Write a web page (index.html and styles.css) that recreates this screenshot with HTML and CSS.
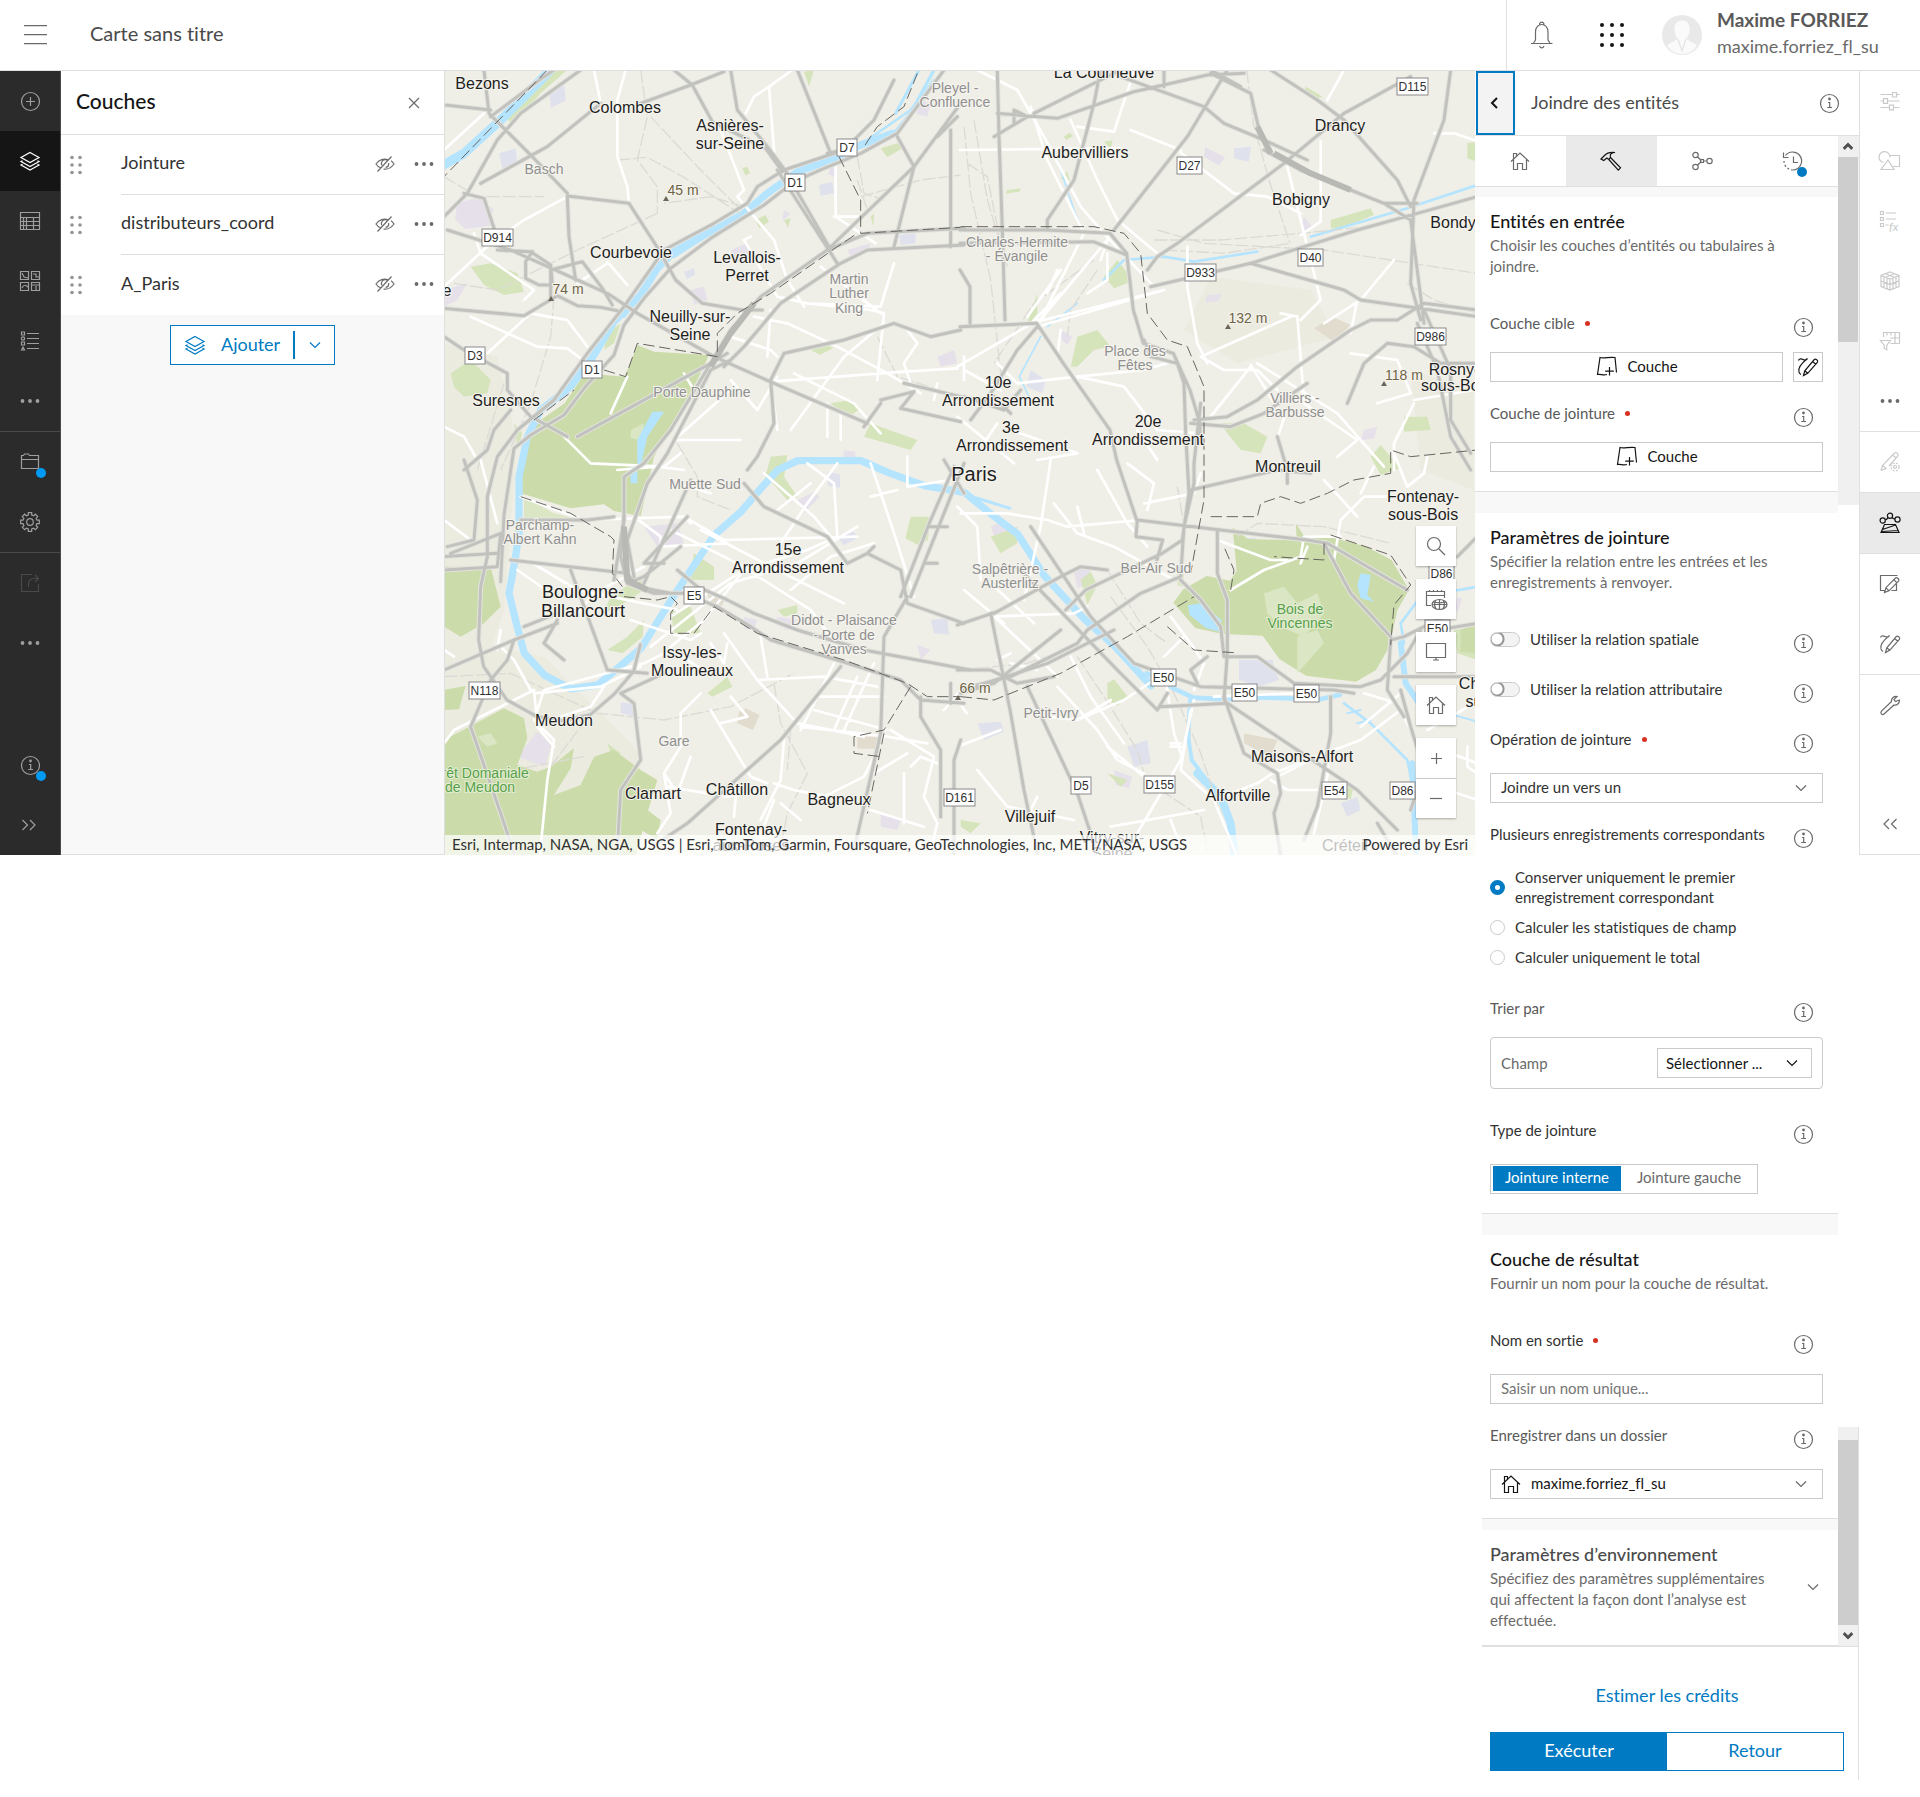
FILE: index.html
```html
<!DOCTYPE html>
<html lang="fr">
<head>
<meta charset="utf-8">
<meta name="viewport" content="width=device-width, initial-scale=1">
<title>Carte sans titre</title>
<link rel="stylesheet" href="styles.css">
</head>
<body>
<svg class="sprite" aria-hidden="true">
  <symbol id="i-info" viewBox="0 0 24 24"><circle cx="12.500" cy="12.500" r="9"/><circle class="fill" cx="12.500" cy="8" r="1.400"/><path d="M11 11.500h1.700v5M10.300 16.500h4.700"/></symbol>
  <symbol id="i-plus-circle" viewBox="0 0 24 24"><circle cx="12.500" cy="12.500" r="9"/><path d="M12.500 8v9M8 12.500h9"/></symbol>
  <symbol id="i-layers" viewBox="0 0 24 24"><path d="M12 3.500l9 5-9 5-9-5zM4.500 11.800L3 12.600l9 4.900 9-4.900-1.500-.8M4.500 15.300L3 16.100l9 4.900 9-4.900-1.500-.8"/></symbol>
  <symbol id="i-table" viewBox="0 0 24 24"><path d="M2.500 3.500h19v17h-19zM2.500 8.500h19M2.500 12.500h19M2.500 16.500h19M8.500 8.500v12M15.500 8.500v12M5.500 8.500v12"/></symbol>
  <symbol id="i-basemap" viewBox="0 0 24 24"><path d="M2.500 2.500h8v8h-8zM13.500 2.500h8v8h-8zM2.500 13.500h8v8h-8zM13.500 13.500h8v8h-8zM4 4l2 4 4 1M15 5h3v3h3M4 19c2-4 4-3 6-1M14 16h7M18 17v4"/></symbol>
  <symbol id="i-legend" viewBox="0 0 24 24"><path d="M9 4.500h12M9 9.500h12M9 14.500h12M9 19.500h12M3.500 3h3v3h-3zM3.500 13h3v3h-3zM3.500 21l1.500-3 1.500 3z"/><circle cx="5" cy="9.500" r="1.600"/></symbol>
  <symbol id="i-more" viewBox="0 0 24 24"><g class="fill"><circle cx="4.500" cy="12" r="1.900"/><circle cx="12" cy="12" r="1.900"/><circle cx="19.500" cy="12" r="1.900"/></g></symbol>
  <symbol id="i-folder" viewBox="0 0 24 24"><path d="M3.500 18.500v-13h2l1-1.500h4l1 1.500h9v13zM3.500 9.500h17"/></symbol>
  <symbol id="i-gear" viewBox="0 0 24 24"><circle cx="12" cy="12" r="3.300"/><path d="M10.300 5V2.700h3.400V5l1.900.8 1.700-1.600 2.400 2.400-1.600 1.700.8 1.900h2.400v3.500h-2.400l-.8 1.900 1.600 1.700-2.400 2.400-1.700-1.600-1.900.8v2.400h-3.400v-2.400l-1.900-.8-1.700 1.600-2.400-2.400 1.600-1.700-.8-1.900H2.700v-3.500h2.400l.8-1.900-1.600-1.700 2.400-2.400 1.700 1.600z"/></symbol>
  <symbol id="i-share" viewBox="0 0 24 24"><path d="M14 3.500H3.500v17h17V13M10.500 16v-3c0-4 3-5.500 6-5.500h4M17 4l3.500 3.500L17 11"/></symbol>
  <symbol id="i-right2" viewBox="0 0 24 24"><path d="M4.500 7l5 5-5 5M12 7l5 5-5 5"/></symbol>
  <symbol id="i-left2" viewBox="0 0 24 24"><path d="M11 7l-5 5 5 5M18.500 7l-5 5 5 5"/></symbol>
  <symbol id="i-close" viewBox="0 0 24 24"><path d="M7 7l10 10M17 7L7 17"/></symbol>
  <symbol id="i-down" viewBox="0 0 24 24"><path d="M7 9.500l5 5 5-5"/></symbol>
  <symbol id="i-eye-off" viewBox="0 0 24 24"><path d="M18.500 4.500l-14 15M7.500 15.800C5.500 15 4 13.600 3 12c3-4.300 8-6 12.500-4M18 8.800c1.200.8 2.200 1.900 3 3.200-3 4-7 5.700-10.500 5M14 8c-4-1.200-6.500 1.800-5.300 5.300M15.700 11c.3 2.500-1 4-3.200 4.500"/></symbol>
  <symbol id="i-handle" viewBox="0 0 24 24"><g class="fill"><circle cx="8" cy="4.500" r="1.800"/><circle cx="16" cy="4.500" r="1.800"/><circle cx="8" cy="12" r="1.800"/><circle cx="16" cy="12" r="1.800"/><circle cx="8" cy="19.500" r="1.800"/><circle cx="16" cy="19.500" r="1.800"/></g></symbol>
  <symbol id="i-home" viewBox="0 0 24 24"><path d="M3 12.500L12 4l9 8.500M5.500 10.500v10h4v-6h5v6h4v-10M5.500 10V4.500h3V7"/></symbol>
  <symbol id="i-hammer" viewBox="0 0 24 24"><path d="M11.500 8.500l10 10.300-2.200 2.400L9.800 10.500M2 10l3.500-3.500C8 3.500 12 3 16 3.500c-3 .3-5 1.500-4.700 3.300L11.500 8.500 9.800 10.500 7.800 9 4.800 11.500z"/></symbol>
  <symbol id="i-model" viewBox="0 0 24 24"><circle cx="5.500" cy="6" r="2.700"/><circle cx="5.500" cy="18" r="2.700"/><circle cx="19.500" cy="12" r="2.700"/><path d="M7.500 8l4 3.500M7.500 16l4-3.500M14 12h2.500M10.500 10.500h3v3h-3z"/></symbol>
  <symbol id="i-history" viewBox="0 0 24 24"><path d="M4.500 6.500a9 9 0 1 1 7.500 14.500M2.500 3.500v5h5M12.500 7.500v6h4.500"/><path stroke-dasharray="2 2" d="M3 12a9 9 0 0 0 9 9"/></symbol>
  <symbol id="i-layer-add" viewBox="0 0 24 24"><path d="M12 20.500c-4 1-6-.5-9.500 0l2.500-17c4 1.500 9-1 15 0l1.500 15M14.500 13v8.500M10.200 17.200h8.600"/></symbol>
  <symbol id="i-sketch" viewBox="0 0 24 24"><path d="M7.500 20.500l1.300-4.700L18.300 4.500c1.200-1.200 4.200 1 3.200 2.600L11.700 18.300zM8.800 15.800l2.900 2.500M16.600 6.500l3.200 2.700M2.500 5.500c.5-2 3-2 4.500-1s3 .8 4.500-1c-5 4-10 9.500-8.500 13.500.5 1.200 1 2 2 2.500"/></symbol>
  <symbol id="i-sliders" viewBox="0 0 24 24"><path d="M2.500 5.500h12M18.500 5.500h3M14.500 3.500h4v4.500h-4zM2.500 12h3M9.500 12h12M5.500 9.700h4v4.600h-4zM2.500 18.500h9M15.500 18.500h6M11.500 16.200h4v4.600h-4z"/></symbol>
  <symbol id="i-shapes" viewBox="0 0 24 24"><path d="M3 20.500h13L10 11zM12 6.500h9.500v11h-6.500M5.500 13.500a5.500 5.500 0 1 1 6.500-5"/></symbol>
  <symbol id="i-cube" viewBox="0 0 24 24"><path d="M12 3l9 3.500v11L12 21l-9-3.500v-11zM3 6.500l9 3.500 9-3.500M12 10v11M6 7.700v11M9 9v11M15 9v11M18 7.700v11M3 12l9 3.500 9-3.500M7.500 4.800l9 3.500M16.500 4.800l-9 3.500"/></symbol>
  <symbol id="i-funnel" viewBox="0 0 24 24"><path d="M5.500 8V3.500h16v11h-9M9 3.500v3M13 3.500v3M17 3.500v11M12 9h9.500M2.500 11.500h10l-3.700 4.700v4.600l-2.600-1.300v-3.300z"/></symbol>
  <symbol id="i-style" viewBox="0 0 24 24"><path d="M3 20.500l1.500-5L16.500 3c2-1 4.500 1 3.500 3l-9 10M4.500 15.500L8 18.500l-5 2M14.500 5l3.500 3"/><circle cx="17" cy="17" r="1.500"/><circle cx="17" cy="17" r="4" stroke-dasharray="2 1.200"/></symbol>
  <symbol id="i-analysis" viewBox="0 0 24 24"><circle cx="4.700" cy="9.500" r="2.600"/><circle cx="12" cy="4.700" r="2.600"/><circle cx="19.500" cy="8.500" r="2.600"/><path d="M3 21.500l3.500-8h11l3.500 8zM4.500 18.500l13-4.500M4 20.500l16-1M7.300 8.700c2 0 2-1.500 2.700-2M14 6.700c1 .3 1.500 1.300 3 1.300"/></symbol>
  <symbol id="i-edit" viewBox="0 0 24 24"><path d="M7 18.500H2.500v-15h17M18.500 12v6.500h-5M6.500 20.500l1.400-4.800L17.500 6c1.500-1 4.200 1.200 3.200 3L11 18.800zM7.900 15.700l3.100 3.100M16 7.800l3 3"/></symbol>
  <symbol id="i-wrench" viewBox="0 0 24 24"><path d="M13.500 8.500c-.5-3 2-5.500 5.500-5L16 6.500l1.500 2 4-1.500c0 3.500-2.500 5.500-5.500 5L6 21c-2 1.500-4-1-2.700-2.700z"/></symbol>
  <symbol id="i-search" viewBox="0 0 24 24"><circle cx="10" cy="10" r="6.500"/><path d="M15 15l6 6"/></symbol>
  <symbol id="i-base-cal" viewBox="0 0 24 24"><path d="M7 18.500H2.500v-14h18V11M2.500 8.500h18M5.500 3v2M9.500 3v2M13.500 3v2M17.500 3v2"/><ellipse cx="15.500" cy="17.500" rx="7.500" ry="5"/><path d="M8 17.500h15M15.500 12.500v10M12 13c-2 3-2 6 0 9M19 13c2 3 2 6 0 9M9 15c4 1 9 1 13 0"/></symbol>
  <symbol id="i-screen" viewBox="0 0 24 24"><path d="M2.500 3.500h19v14h-19zM9 20h6M12 17.500v2.500"/></symbol>
  <symbol id="i-plus" viewBox="0 0 24 24"><path d="M12.500 7v11M7 12.500h11"/></symbol>
  <symbol id="i-minus" viewBox="0 0 24 24"><path d="M6 11.500h12"/></symbol>
</svg>

<header class="topbar">
  <button class="plain menu" aria-label="Menu"><svg viewBox="0 0 24 20" width="24" height="20"><path d="M0 .7h23M0 9.700h23M0 18.700h23"/></svg></button>
  <h1>Carte sans titre</h1>
  <div class="account">
    <button class="plain" aria-label="Notifications"><svg viewBox="0 0 24 28" width="24" height="28"><path d="M1 22.500h21.500M3.500 22l2-3v-8c0-10 12.500-10 12.500 0v8l2 3M9.500 4.500C9 0 14.500 0 14 4.500M9.500 25c1 2.500 3.500 2.500 4.500 0"/></svg></button>
    <button class="plain dark" aria-label="Applications"><svg viewBox="0 0 26 26" width="26" height="26"><g class="fill"><circle cx="3" cy="3" r="2"/><circle cx="13" cy="3" r="2"/><circle cx="23" cy="3" r="2"/><circle cx="3" cy="13" r="2"/><circle cx="13" cy="13" r="2"/><circle cx="23" cy="13" r="2"/><circle cx="3" cy="23" r="2"/><circle cx="13" cy="23" r="2"/><circle cx="23" cy="23" r="2"/></g></svg></button>
    <a href="#profil" class="user">
      <svg class="avatar" viewBox="0 0 40 40" width="40" height="40"><circle cx="20" cy="20" r="20" fill="#e9e9e9"/><path d="M12.500 13c0-10 15-10 15 0 0 7-2 9-3.500 11l11 6c-6 12-24 12-30 0l11-6c-1.500-2-3.500-4-3.500-11z" fill="#fafafa"/><path d="M16 24l4 12 4-12" fill="none" stroke="#e4e4e4"/></svg>
      <span class="who"><b>Maxime FORRIEZ</b><span>maxime.forriez_fl_su</span></span>
    </a>
  </div>
</header>

<main class="workspace">
  <nav class="rail dark-rail" aria-label="Contenu">
    <button aria-label="Ajouter"><svg><use href="#i-plus-circle"/></svg></button>
    <button class="active" aria-label="Couches"><svg><use href="#i-layers"/></svg></button>
    <button aria-label="Tables"><svg><use href="#i-table"/></svg></button>
    <button aria-label="Fond de carte"><svg><use href="#i-basemap"/></svg></button>
    <button aria-label="Légende"><svg><use href="#i-legend"/></svg></button>
    <button class="end" aria-label="Plus"><svg><use href="#i-more"/></svg></button>
    <button aria-label="Enregistrer"><svg><use href="#i-folder"/></svg><i class="badge"></i></button>
    <button class="end" aria-label="Propriétés"><svg><use href="#i-gear"/></svg></button>
    <button class="off" aria-label="Partager"><svg><use href="#i-share"/></svg></button>
    <button aria-label="Plus"><svg><use href="#i-more"/></svg></button>
    <span class="spacer"></span>
    <button aria-label="Aide"><svg><use href="#i-info"/></svg><i class="badge"></i></button>
    <button aria-label="Développer"><svg><use href="#i-right2"/></svg></button>
  </nav>

  <section class="layers">
    <div class="layers-head"><h2>Couches</h2><button class="plain" aria-label="Fermer"><svg><use href="#i-close"/></svg></button></div>
    <ul>
      <li><svg class="handle"><use href="#i-handle"/></svg><div class="layer"><span>Jointure</span><button class="plain" aria-label="Afficher"><svg><use href="#i-eye-off"/></svg></button><button class="plain" aria-label="Options"><svg><use href="#i-more"/></svg></button></div></li>
      <li><svg class="handle"><use href="#i-handle"/></svg><div class="layer"><span>distributeurs_coord</span><button class="plain" aria-label="Afficher"><svg><use href="#i-eye-off"/></svg></button><button class="plain" aria-label="Options"><svg><use href="#i-more"/></svg></button></div></li>
      <li><svg class="handle"><use href="#i-handle"/></svg><div class="layer"><span>A_Paris</span><button class="plain" aria-label="Afficher"><svg><use href="#i-eye-off"/></svg></button><button class="plain" aria-label="Options"><svg><use href="#i-more"/></svg></button></div></li>
    </ul>
    <div class="add">
      <button class="add-main"><svg><use href="#i-layers"/></svg><span>Ajouter</span></button>
      <button class="add-more" aria-label="Autres ajouts"><svg><use href="#i-down"/></svg></button>
    </div>
  </section>

  <section class="map" aria-label="Carte">
    <svg class="map-canvas" viewBox="1 1 1030 784" preserveAspectRatio="xMinYMin slice">
      <rect width="1031" height="785" fill="#f0efe7"/>
      <g transform="scale(.33333)">
        <!-- relief and built-up areas -->
        <g fill="#e9e7da" opacity=".55">
          <path d="M0 820l160 40 60 260-40 500-60 180-120-80zM2300 620l300 40 80 140-300 80-160-100zM0 1700l300 60 300 300-100 295H0zM2900 900l190 60v300l-160-60z"/>
        </g>
        <g fill="#e6e0ea">
          <path d="M40 400l60-18 48 35-10 50-75 10-30-30zM1420 90l40 10-10 40-32-8zM310 60l45-18 10 50-40 20zM620 885l30 25-10 18zM2284 232l60 30-20 25-45-28zM2288 676l46-5-10 22-40 5zM2580 440l25 30-20 22-12-30zM1850 780l35 20-15 25-22-20zM1640 1370l45-20 30 50-50 40zM1060 1290l50-25 18 15-48 48zM600 1370l100-10 20 60-80 10zM1420 1725l40 14-30 30zM220 2060l60-75 42 40-20 65zM1890 1505l40-20 20 50-50 20zM2010 2100l55 20-10 35-40-10zM1200 1140l35 5-5 35-33-5zM1480 860l50-20 10 40-50 10zM1020 420l20 12-25 20zM2760 1080l40-10-10 36-40 5zM1000 1640l60 10-30 30-40-20zM1310 2230l60 20-10 30-50-10zM3040 1580l14 6-12 40-10-4zM740 660l40-10 10 40-40 15zM860 540l50-20 20 40-50 15zM0 660l70-20-30 50-40 20zM1210 540l70-20-10 30-50 10zM1160 290l18 8-8 22-18-8zM900 1640l40 10-10 30-30-5z"/>
        </g>
        <g fill="#dfe2ec">
          <path d="M320 60l40-15 5 40-45 30zM165 250l50-15 5 45-45 15zM1125 345l40-10 5 35-40 7zM1365 495l50-5v30l-45 5zM2370 235l52-5-8 45-44-10zM1760 900l45 30-10 40-48-20zM1150 1205l38 8v40l-36-6zM2385 1770l100 0 20 60-60 20-60-20zM2400 1405l35-2-3 50-30-4zM1600 1960l70-5 10 30-60 25zM530 1897l42 4-5 38-38-10zM2050 2030l60-20 10 70-50 10zM1180 1400l50-15 10 20-40 20zM2690 2200l50-20 10 40-40 20zM720 605l30-10 4 20-26 12zM1460 1650l50-6 5 50-45-4z"/>
        </g>
        <g fill="#e2dccf"><path d="M2610 775l55-35 55 25-50 50zM2564 1420l68 8-8 52-66-2zM885 1925l20-10 42 20-20 45-48-20zM1240 2000h70v36h-70zM2400 1990l100 20-20 50-80-40zM790 1570l60 10-20 30-30-6z"/></g>
        <!-- small parks -->
        <g fill="#d6e4bb">
          <path d="M290 70L210 160l-20-10 110-130 30-20h40zM80 590l60-10 80 30 20 55-60 10-60-30zM20 910l60-40 60 60-10 40-70 10-30-30zM1310 235l60-18 10 15-50 30zM1080 5l30-5-15 50zM490 1740l60-40 50-50-4 50-60 50zM1280 1060l140 50-20 30-140-40zM1160 1000l60-10 30 25-40 30zM1100 840l50-16 18 10-40 20zM1900 800l60-20 40 50-50 10-50 50h-20zM1980 620l40-50 40 50-10 20-40 15zM2330 1060l70 0 70 40-20 50-60-10-40-50zM2660 450l120-35 10 20-100 40h-30zM2880 1040l70 0 10 40-80 5zM2586 50l50 30-15 5-40-25zM1400 1340l60 0-8 70-30 15-38-20zM1640 1400l80-30 0 50-50 30zM1910 1530l30-25 20 40-30 60zM750 1450l60 40 0 40-70 0zM1000 1190l60 90-30 10-70-80zM790 1870l60-50 15 30-60 30zM1990 1840l20-12 40 50-30 30-30-20zM1000 1620l60-15 0 25-40 10zM680 1620l60-10 30 80-80 0zM1020 450l20-5-8 28zM500 1580l90-60 10 40-90 60-30 5zM2680 2150l50-5-10 45zM3070 220l30-5v60l-30-10zM1740 780l20-50 20-60 0 60-20 30zM2780 1160l30-35 60 70-60 20zM1990 2110l60 20-20 20zM1550 2250l60 10-30 30-30-20zM200 2100l40 10-10 20zM980 1160l50-5-10 70-60 10zM490 2020l40 30-20 30zM3030 1680l70-10v100l-60-20zM210 1060l25 30-14 50zM490 790l40-30-20 60-30 20zM935 450l30-15 10 20-30 20zM895 295l15-5 8 20-14 6zM1280 440l10-10-2 40zM1850 325l20-20 8 30zM1860 200l16-12 12 10-22 12zM1980 215l26-4-6 26zM1690 360l40-5-4 10-40 6z"/>
        </g>
        <!-- woods -->
        <g fill="#cbdcaa">
          <path d="M580 825l50 20 165 10-35 75-85 150-45 80-40 178-80-15-30-20-100 12-150-45 2-110 30-90 100-70 60-90 120 10z"/>
          <path d="M2578 1395l80 5 110 30 75 40 52 90-35 60-24 110-40 70-60 35-150-18-80-50-50-70-120-5-82-18-66-76 30-40 70-40 70 14 20-30-12-130 46 35 146 4-2-50z"/>
          <path d="M2678 1475l170 55 30 20-40 60-10 110-100-130z"/>
          <path d="M0 1860l65-12-20 70L0 1920zM0 2010l180-95 60 30 10 60-30 80 60 20 40-15 70-55-10 60-50 80 80-30 40-85 60-20 80 60 50 30-30 100-40 145H0zM550 2200l60 20 40 30-10 60-80-50z"/>
          <path d="M0 1490l140 0 30 120-50 50-70 40L0 1670zM3050 1680l50-20v90l-50-5z"/>
        </g>
        <g fill="#dbe6c4"><path d="M2460 1570l60-20 40 50 60-30 20 60-60 70-70-30-40-40zM240 1280l90 50 60 15-100 10-50-10zM2560 1700l60-20 20 40-80 90zM100 2000l40-10 20 30-30 10zM560 1080l40-20-10 50-30-6zM2200 1490l20 20-4 40-16-4z"/></g>
        <!-- water -->
        <g fill="none" stroke="#b5e4ff" stroke-linecap="round" stroke-linejoin="round">
          <path stroke-width="28" d="M320 0L170 150 60 250-10 290"/>
          <path stroke-width="10" d="M1470 0l-70 130-50 60"/>
          <path stroke-width="22" d="M1345 190l-95 35-90 45-100 35-90 65-70 60-90 50-110 55-60 60-50 80-80 80-60 100-70 95-90 70-40 80-25 120 0 170-12 80-18 100 22 90 24 90 60 65 80 42 80-12 60-50 70-60 50-80 50-80 60-90 60-90 80-70 60-70 50-55 60-28h190l80 35 110 40 120 20 80 65 80 60 80 125 120 130 90 80 110 120"/>
          <path stroke-width="9" d="M1548 1270l70 20 80 25M640 600l-40 60-60 80M800 490l-110 70M1425 0l-70 130"/>
          <path stroke-width="14" d="M2108 1810l80 45 60 28 90 5 110-6 180 6 60-14"/>
          <path stroke-width="12" d="M2238 1890l-5 110 10 70 60 80"/>
          <path stroke-width="24" d="M2260 2110l70 70 30 80 12 100"/>
          <path stroke-width="8" d="M1470 30l-70 90-130 90M2600 500l290-85 210-70M2700 1900l80 60 110 110 20 100 10 190M2880 1720l-10-60 60-80 170-30M1980 630l60-60 120-10 90 15M2250 575l190-30"/>
          <path stroke-width="5" d="M1840 270l50 150 25 60M1810 770l90-70M1790 800l-64 120 34 70"/>
          <path stroke-width="18" d="M2870 1720l15 120 40 60M2904 2080l12 260"/>
          <path stroke-width="6" d="M2710 1930l40-10M2740 1960l40-10M3030 1935l70 20"/>
        </g>
        <path fill="#b5e4ff" d="M2232 1606l40-6 60 50-5 35-40-10-50-40zM2750 1510l30 5-10 60 20 20-40-10-10-40zM580 1110l45-85 35 0-50 75-20 90h-10zM560 1190h20v50h-20z"/>
        <!-- rail lines -->
        <g fill="none" stroke="#dcdad5" stroke-width="4" stroke-dasharray="40 8">
          <path d="M590 0l20 140-30 130 60 80v80M520 270l90-8 110 60 170 110M620 140l150 160 120 120M900 410l-100-30-140 20M0 320l100 60h200M640 430L400 540 160 660 30 640M1240 260l20 110 60 20M1240 330l30 90M1250 380l180-50 120-15M100 1200l80-260M330 680l-10 120-60 200-90 200M700 1120l60 100 0 60 100 40M1300 800l60 120 190 60"/>
          <path d="M1560 170l20 200 60 260 30 280M1590 150l40 240 60 200M1570 280l60 40 40 200M1950 570l-180 130-120 180M1960 600l-80 120-10 80M2408 0l20 160 50 180 60 180M2140 480l140 40 360 20 200 30 260 40M2130 510h200l240-20 200-20M2160 540l180 10 200-30M2890 640l80 50 130 40M2380 1400l60-40 200 10 200 50M2200 1250l20 120-10 100M1990 1500l100 160 80 60M2000 1580l110 150 80 140 80 180 60 180 40 130M1900 1760l80 120 100 160 40 140"/>
          <path d="M0 1820l200-10 130 60 130 60 200 20 200-40 190-100M990 1840l20 120 80 150-60 120-20 100M1040 1980l-10 120M320 2090l120-160 80-60M100 2120l320-60M1548 1800l200-20 180-60M2150 2160l120 80 20 100"/>
        </g>
        <!-- secondary roads -->
        <g class="white-roads">
          <path d="M545 0l-25 90 0 170 30 90 5 50M450 0l20 100M975 50l15 190 0 40M990 40l-60 40-25 50M1045 0l-70 50M0 240l120-110M830 180l70 180-20 20 110 130 40 120 50 80M1175 280v160l120 80M1170 440h90M370 380l-130 70-100 70-140 130M90 490l20 60 160 110-30 30M490 580l-90 60M490 575l60 70M130 850l130-120 110 20 60 80M80 740l200 90 90 5 80 60M920 500l-20 10 100 170 90 20 220 10 40-130M1090 700l190 20 40 10-20 200M1130 590l180 140M1390 780l30 40-40 60 20 60M860 800l120 40 20 20M860 930l80 90 60-100M720 910l30 50M550 920l-50 110M980 930l20 150M860 960L690 1110l200 0M1050 910l180 90 80 90M980 935l400-30 160-10M1040 1080l160-220 120-100M1150 1000v100M1190 1030v80M930 740l100 20 150 70 150 80 100 60M980 720l-10 140"/>
          <path d="M1600 0l120 60 80 140 110 210 70 80 150 160M1760 110l50 160 110 220-140 280M1880 150l80 180 60 120 120 100M1548 240l480-5M1900 170l110 15 60-180M2060 180l150 60M2200 240l170 130 100 10 100 50M2530 290l50 200 50 200-60 60M2630 215v240l-60 40M2700 0l-50 90M2970 190h60l60 20M1800 740L1540 890M1850 670l-90 90 400-100M1780 770l380-110M1780 760l210-250-20 60M1850 600l-100 140M1810 670l30-70M2230 530v120l30 170 30 60M1990 550v80l-60 40M2540 740l-270 120 70 40 100 0 60 60M2420 885l100 160-20 60M2420 890L2300 1040M2440 880l240 150 140 160M2580 1000l160 110-60 50M2580 990l-20-250-50-10M2720 850l140 20 40 100-100 30M2640 760l110-70 100-120M2740 690l-20 100M2910 1000l-60 120 0 80M2910 990l180-30M1560 900l110 60M1660 880l60 60 180-20 200-20 100-30M1900 920l140 30 100 130 120 10M2080 1080l60 90M1560 860v70M1700 1080l200 70-120 20M1660 1060l-40 60M1540 1040l110 90 60 50M1850 780l-10 80 60 70"/>
          <path d="M0 1070l60 30 40 70M110 1170l50 190M0 1350l80 60M360 1100l80 80 220 10 50-40M520 1200l120-10 80 10M1480 940l-10 50M230 1280l190 70 300-10 20 20M570 1340l80 60 0 30 200-10M720 1340l120 70 400-10M680 1380l200 100 220 140 60 80M700 1240l100 30M770 1380l250 130 180 90M960 1210l150 130 50 60M1100 1240l-100 80M1090 1180l80 60 10 160M1010 1420l80-120 90-120M1280 1180l80 240 50 160M1390 1160l0 90 130-20M1280 1280l80-20M1180 1400l-90 40-190 60-220 140M1240 1370l-180 110-200 60-240 190M1290 1420l-130 40-120 100M900 1500l-120 150-100 80M250 1470l150 90 200 40 100 20M600 1490l-150 80-50 60M220 1500l100 70M560 1650l180 60 30-20M840 1690l100 140 200-10 160 30M800 1720l40 60 10-60M700 1750l60 40M680 1740l-80 40-300 80-30 90 60 60-20 120-20 200-5 100M260 1860l-50-90-40-40M160 1740l10-60M0 1740l30 20M270 1870l200-20 120-60M270 1860l-240 120-30 40M480 1850l-40 60-90 30M270 1860l10 110 50 60M940 1830l120 130 200 40M950 1700l20 120M860 1880l50 60-80 20M770 1870l-60 60v100l-50 80 40 60 40-110M800 1920l120 200 50 20M990 2140l60 20 100 20M1020 2010l-10 120-60 120M1070 1970l260 30 120 20M1120 1880h200M1070 1980l100-200M1170 1980l70-160M1200 1980l90-200M1110 1920l220 60M970 2160l-120 20-180-30M660 2110l20 120-40 60M880 2120l-10 120M990 2190l-50 130M1010 2200l60 50"/>
          <path d="M1320 2000l-60 120-120 60M1340 1980l130 80-30 120 40 80-20 80M1400 2090l30-30 50 20M1380 2110v150M1280 2220l160 50M1290 2110l100-60M1548 1900l20 30M1540 2030l130-50M1500 1920l50-60"/>
          <path d="M1540 1310l60 60 10 160M1550 1330l140 0 120 20 60 20 220-20M1820 1170l-30 200-50 220M1830 1300l70 90 110 40 180 100M1900 1310l20 80M1960 1200l90 160 60 70M2050 1180l80 60-20 80M2100 1300l150-30 20-60M1640 1640l250-10 40-20M1640 1540l130 120M1640 1630l160 150 40 40M1660 1770l40-20M1680 1660l-120-100M1700 1780l80 20M1840 1850l120 130 60 90 80 40M1880 1760l60 120 100 140M1810 1940l90 10 100-60M1900 1950l140-60 90-60M2310 1880l240-10M2250 1890l-40 180-160 270M2160 1800l30 190 20 60M2180 2020h30M2180 2030h30M2240 1920l-30 180 100 90 130-50 60-40M2310 2190l70 170M2490 2110l100-40 160-60 120-90M2480 2130l50 30 90 0M2160 1760l60-60M2180 1640l60 80 40 60-30 80M2320 1410l160 60 50 0M2360 1560l100-60 110-40 10-60 110 0M2570 1480l20-50M2690 1350l-20 120M2690 1350l70-70 110 0 50 10M2640 1230l100 110M2750 1270l40-80M2850 1150l40 100 50-40 10-50M2760 1870l100 30 50 100 40 50M2870 1870l-120 100M2660 1990l-10 130-40 170M2950 1980l140-80M3020 2050l80 30M2980 2150l120 40M3070 2030v60l30 20M1990 2030l110 90M1600 2100l90 110 200 40M2000 2270l280-50M2180 2250l30 80M1780 2180l-30 60M2500 2120l80-40"/>
        </g>
        <!-- main roads, drawn twice for a pale casing -->
        <g class="grey-roads casing"><use href="#roads"/></g>
        <g class="grey-roads"><g id="roads">
          <path d="M120 0l15 130 60 60 70 70 105 110M140 140L300 20 330 0M0 105l140 15M410 0L230 130 160 210 70 370 0 440M470 100L310 230 110 340M590 100l150-55 100-40M690 0l55 45 60 110 160 80 50 70M860 0l20 120 90 110 60 80M1060 0l100 250M60 370l60 15 30 90M370 380l5 120 20 130M370 378l185 22 90 140 50 90 80 70 120 20 60 0M10 480l190 60 290 130 90 60 230 130 180 80 280 120M0 715l240 22 100-60 60 30 70 5 50 10M160 540l100 5 60 40 5 60-40 0-40-20 0-50 20-30M320 600l95-25 60 80 30 50M320 600l0 80M0 800l60 40 130 70 0 50 70 80M200 1020l-50 60-20 60-70 60"/>
          <path d="M1350 30l-60 120-90 90-180 60-80 50-30 50-100 60-150 80-120 170-110 140-100 140-110 90-60 80-30 120 0 180-20 90-6 160 15 80 70 100 90 50 80 12 80-18 70-60 60-70 20-80"/>
          <path d="M1550 100L1410 290 1150 540M1500 0l-140 190-110 60-110 45-90 40-90 70-160 100-120 90-80 90-60 80-30 90-90 100-60 80-100 60-50 40-30 200-10 200"/>
          <path d="M1410 290l-50-90M1410 290l-60 240M1520 180v350M1480 200l60-60M1150 540l120-50 290-15M1190 580l80-40 290-15M1190 580l-180 120-110 130-60 60M1150 540l-200 140-90 100-60 100M800 880L400 1100M800 880l-120 200-80 100-60 40 0 130-30 180M860 870l-60 30-130 250-60 90-60 170 20 110M280 1050l90 50M800 880l50-30M980 930l10 130-50 100-30 40M980 930l40-80 180-40 150-50 110 40 90-20M1310 1000l-50 70M1310 990l100-25-40 50 180 40M1380 940l170 40M1000 300l180 280M1045 340l110 190M1150 250l50-10"/>
          <path d="M900 1240l60 70 190 90 60 80 60-30 20-20-20 20 100 50 20 100 170 60M1390 1580l-70 120-10 290-80 350M1400 1580l100-250 60-150M1370 1580l90-230 70-160M1460 1370h50M1440 1480h40M1560 1270l-60-100"/>
          <path d="M0 1460l160-10M20 1450l150-60-10 100-160 10M60 1170l40 120-10 120-80 20M200 1470l350 40 30 40 100 20M380 1500l110 300M240 1670l100-40M340 1650l-40 70 60 50M0 1800l210-90 130-50M210 1710l-20 60-50 60-60 140 90 260 40 120M230 1350h200l80-10M740 1230L600 1540M550 1540l50-20 110-90M540 1340l-10 120 20 80 80 30 90 0 100 40 100 60 60 40 200 60 190 60 60 60 130 10M700 1500l60 50 90 40 80 40 130 50 200 60 320 60M730 1340L600 1480l60 0M490 1800l120 10M660 1810l-130 60 40 30 20 170-60 90-10 180M1190 1790l-180 220-280 250-90 60M1430 1880l0 60 60 100 0 200M1520 1900v-60M1550 2010l-20 60 0 290"/>
          <path d="M1660 0l5 200 10 280 8 270M1660 130l180 15 230-80 220-50 110-5M2030 20l250 90 60 50 120 50 130 60M1970 0l-20 100-60 230-80 120v30M2350 0l-120 200-220 280M2300 10l120 60 30 130M2300 0l90 50M1770 130l260-130M1650 200l100-60-40-20 0 40M2160 0v50M2460 240l110 60 150 60 100 40 100 0M2900 20l-200 110-180 150-320 240-60 40-30 40M2480 0l140 90 80 60 160 180 40 80M3020 0l-20 150-90 240-10 250 30 110M2820 400l80 50 30 230 10 80M3100 380l-180 50-180 50-320 100-300 70M2420 580l280 80 50 30 350 50M3100 720l-160-20-80 50-80 0-60 30-160 110-120 100-90 50-100 10M2940 720l80 180 0 150 60 100M2920 760l60 140 40 200 60 100M2710 1000l50-120 70-60 80 10 80 50 100 0"/>
          <path d="M1548 480l260 0 190 10 50 60 20 170 30 100 90 30 50 110 30 100 0 60M1548 520l400-5 100 40M2100 810l20 50 80 20 20 60 5 150 10 180-20 140-60 40-230 110-60 60M2270 1000l-20 180 0 60-30 130-10 150-120 50-160 110-30 40-200 100-120 30M1548 770l230-10 80 120 140 200 20 90 60 180M1780 770l-60 70-80 130-60 80M1548 600l30 50v110M1560 980l120 40 50-60M1640 970l60 60M2240 1060l120 10 100-40 130-90M2080 1350l-4 50 80 10-20 70M2080 1350l250 30 260 30 60 10 240 140M2640 1420l80 150 120 130M2240 1260l260-60 100 10M2500 1100l30 100 0 40M2320 1380v130l30 80 0 160-10 140M2210 1530l60 60 60 80 10 90 100 0 110 80 200 10 60-20 80-80 40-70M2840 1710l40-10 120-60M2840 1710l-10 150 50 80M3100 1400l-60 60M3100 1660l-120 20M2850 1820h240"/>
          <path d="M1850 1680l-200 160-100 30M2010 1680l-120 60-80 40-250 80M1540 1800l100 0 80 40 110-20M1640 1630l60 300 40 230 40 190M1750 1850l150 320 60 180M1720 1490l300 310 120 120 30-50M1760 1370l180 270 130 140 200 70 400 10 60 10M2150 1910l200-10 300 200 90 60 120 120M2340 1880l60 170 100 60 10 60-20 60 20 130M2660 1880v110l-40 220-40 100M1540 1665l120-40M1650 1630l200-110 60-30 80 10M2900 2220l40-120-40-130-30-110M2800 2260l60 100M2290 1760l-50 40 20 40"/>
        </g></g>
        <g fill="none" stroke="#b8b8b4" stroke-width="18" stroke-linejoin="round"><path d="M800 890l60-100 70-90M2490 250l110 60 120 50M2440 170l40 80M540 1370l10 160 60 30"/></g>
        <!-- administrative limits -->
        <g fill="none" stroke="#66645f" stroke-width="3" stroke-dasharray="34 14">
          <path d="M310 0L0 320M1420 10l-40 100-80 60-40 60M1185 260l65 130v100l300-18M1550 470h400l90 20 50 60 20 180 60 80 60 20 50 120v340l-40 220M480 900l65 20 35-100 240 40 0-70 60-60 100-60 200-140 60-40M270 1050l120-90M230 1280l150 50 120 70 10 10-5 100 30 40M540 1580l100 10 40-10 20 20-20 30v60h70l60-80 130 80M940 1690l260 80 190 70 60 40h100M1400 1850l-80 130-90 20v50l80 10M1320 1990l-50 240M1550 1880l100 10 200-80 200-110 200-120M2170 1670l80 70 120 8M2300 1340h140l10-40 60-20 60 20 80-30 80-40 110-20V1140l60 20 200-20M2360 1560l10-60-30-70M2640 1420v50l-150-10M2660 1395l180 60 60 90-50 60-10 120"/>
        </g>
      </g>
      <g fill="#6b6658"><path d="M219 131l3-5 3 5zM104 231l3-5 3 5zM781 259l3-5 3 5zM937 316l3-5 3 5zM511 630l3-5 3 5z"/></g>

      <g class="towns">
        <text x="38" y="19">Bezons</text><text x="181" y="43">Colombes</text>
        <text x="286" y="61">Asnières-</text><text x="286" y="79">sur-Seine</text>
        <text x="187" y="188">Courbevoie</text>
        <text x="303" y="193">Levallois-</text><text x="303" y="211">Perret</text>
        <text x="246" y="252">Neuilly-sur-</text><text x="246" y="270">Seine</text>
        <text x="62" y="336">Suresnes</text><text x="3" y="226">e</text>
        <text x="660" y="8">La Courneuve</text><text x="641" y="88">Aubervilliers</text>
        <text x="896" y="61">Drancy</text><text x="857" y="135">Bobigny</text><text x="1009" y="158">Bondy</text>
        <text x="554" y="318">10e</text><text x="554" y="336">Arrondissement</text>
        <text x="567" y="363">3e</text><text x="568" y="381">Arrondissement</text>
        <text x="704" y="357">20e</text><text x="704" y="375">Arrondissement</text>
        <text x="1010" y="305">Rosny-</text><text x="1012" y="321">sous-Bois</text>
        <text x="844" y="402">Montreuil</text>
        <text x="344" y="485">15e</text><text x="344" y="503">Arrondissement</text>
        <text x="248" y="588">Issy-les-</text><text x="248" y="606">Moulineaux</text>
        <text x="120" y="656">Meudon</text><text x="209" y="729">Clamart</text>
        <text x="293" y="725">Châtillon</text><text x="395" y="735">Bagneux</text>
        <text x="307" y="765">Fontenay-</text><text x="307" y="781">aux-Roses</text>
        <text x="858" y="692">Maisons-Alfort</text><text x="794" y="731">Alfortville</text>
        <text x="586" y="752">Villejuif</text><text x="668" y="773">Vitry-sur-</text><text x="668" y="789">Seine</text>
        <text x="901" y="781">Créteil</text>
        <text x="979" y="432">Fontenay-</text><text x="979" y="450">sous-Bois</text>
        <text x="1058" y="619">Champigny-</text><text x="1058" y="637">sur-Marne</text>
      </g>
      <g class="towns large"><text x="139" y="528">Boulogne-</text><text x="139" y="547">Billancourt</text></g>
      <g class="towns city"><text x="530" y="411">Paris</text></g>
      <g class="quarters">
        <text x="100" y="104">Basch</text><text x="511" y="23">Pleyel -</text><text x="511" y="37">Confluence</text>
        <text x="405" y="214">Martin</text><text x="405" y="228">Luther</text><text x="405" y="243">King</text>
        <text x="258" y="327">Porte Dauphine</text>
        <text x="573" y="177">Charles-Hermite</text><text x="573" y="191">- Évangile</text>
        <text x="691" y="286">Place des</text><text x="691" y="300">Fêtes</text>
        <text x="851" y="333">Villiers -</text><text x="851" y="347">Barbusse</text>
        <text x="261" y="419">Muette Sud</text>
        <text x="96" y="460">Parchamp-</text><text x="96" y="474">Albert Kahn</text>
        <text x="400" y="555">Didot - Plaisance</text><text x="400" y="570">- Porte de</text><text x="400" y="584">Vanves</text>
        <text x="230" y="676">Gare</text>
        <text x="566" y="504">Salpêtrière -</text><text x="566" y="518">Austerlitz</text>
        <text x="712" y="503">Bel-Air Sud</text><text x="607" y="648">Petit-Ivry</text>
      </g>
      <g class="quarters peaks"><text x="239" y="125">45 m</text><text x="124" y="224">74 m</text><text x="804" y="253">132 m</text><text x="960" y="310">118 m</text><text x="531" y="623">66 m</text></g>
      <g class="quarters woods"><text x="33" y="708">Forêt Domaniale</text><text x="36" y="722">de Meudon</text><text x="856" y="544">Bois de</text><text x="856" y="558">Vincennes</text></g>
      <g class="shields">
        <rect x="393" y="69" width="20" height="17"/><text x="403" y="82">D7</text>
        <rect x="341" y="104" width="20" height="17"/><text x="351" y="117">D1</text>
        <rect x="38" y="159" width="31" height="17"/><text x="53.500" y="172">D914</text>
        <rect x="21" y="277" width="20" height="17"/><text x="31" y="290">D3</text>
        <rect x="138" y="291" width="20" height="17"/><text x="148" y="304">D1</text>
        <rect x="953" y="8" width="31" height="17"/><text x="968.500" y="21">D115</text>
        <rect x="733" y="87" width="25" height="17"/><text x="745.500" y="100">D27</text>
        <rect x="854" y="179" width="25" height="17"/><text x="866.500" y="192">D40</text>
        <rect x="741" y="194" width="31" height="17"/><text x="756.500" y="207">D933</text>
        <rect x="971" y="258" width="31" height="17"/><text x="986.500" y="271">D986</text>
        <rect x="240" y="517" width="20" height="17"/><text x="250" y="530">E5</text>
        <rect x="25" y="612" width="31" height="17"/><text x="40.500" y="625">N118</text>
        <rect x="707" y="599" width="25" height="17"/><text x="719.500" y="612">E50</text>
        <rect x="788" y="614" width="25" height="17"/><text x="800.500" y="627">E50</text>
        <rect x="850" y="615" width="25" height="17"/><text x="862.500" y="628">E50</text>
        <rect x="627" y="707" width="20" height="17"/><text x="637" y="720">D5</text>
        <rect x="700" y="706" width="31" height="17"/><text x="715.500" y="719">D155</text>
        <rect x="500" y="719" width="31" height="17"/><text x="515.500" y="732">D161</text>
        <rect x="878" y="712" width="25" height="17"/><text x="890.500" y="725">E54</text>
        <rect x="946" y="712" width="25" height="17"/><text x="958.500" y="725">D86</text>
        <rect x="985" y="495" width="25" height="17"/><text x="997.500" y="508">D86</text>
        <rect x="981" y="550" width="25" height="17"/><text x="993.500" y="563">E50</text>
      </g>
    </svg>
    <div class="map-tools">
      <button aria-label="Rechercher"><svg><use href="#i-search"/></svg></button>
      <button aria-label="Fonds"><svg><use href="#i-base-cal"/></svg></button>
      <button aria-label="Plein écran"><svg><use href="#i-screen"/></svg></button>
      <button aria-label="Vue par défaut"><svg><use href="#i-home"/></svg></button>
      <div class="zoom"><button aria-label="Zoom avant"><svg><use href="#i-plus"/></svg></button><button aria-label="Zoom arrière"><svg><use href="#i-minus"/></svg></button></div>
    </div>
    <div class="credits"><span>Esri, Intermap, NASA, NGA, USGS | Esri, TomTom, Garmin, Foursquare, GeoTechnologies, Inc, METI/NASA, USGS</span><span>Powered by Esri</span></div>
  </section>

  <section class="tool">
    <div class="tool-head">
      <button class="back" aria-label="Retour"><svg viewBox="0 0 24 24"><path d="M13 7l-5 5 5 5"/></svg></button>
      <h2>Joindre des entités</h2>
      <button class="plain" aria-label="Information"><svg><use href="#i-info"/></svg></button>
    </div>
    <div class="tool-scroll">
      <form class="tool-form" onsubmit="return false">
        <div class="tabs">
          <button type="button" aria-label="Accueil"><svg><use href="#i-home"/></svg></button>
          <button type="button" class="on" aria-label="Outils"><svg><use href="#i-hammer"/></svg></button>
          <button type="button" aria-label="Modèles"><svg><use href="#i-model"/></svg></button>
          <button type="button" aria-label="Historique"><svg><use href="#i-history"/></svg><i class="badge"></i></button>
        </div>

        <section class="block opening">
          <h3>Entités en entrée</h3>
          <p>Choisir les couches d’entités ou tabulaires à joindre.</p>
          <div class="row first soft"><span>Couche cible<i class="req"></i></span><button type="button" class="plain" aria-label="Information"><svg><use href="#i-info"/></svg></button></div>
          <div class="pair"><button type="button" class="box pick"><svg><use href="#i-layer-add"/></svg>Couche</button><button type="button" class="box square" aria-label="Dessiner"><svg><use href="#i-sketch"/></svg></button></div>
          <div class="row after soft"><span>Couche de jointure<i class="req"></i></span><button type="button" class="plain" aria-label="Information"><svg><use href="#i-info"/></svg></button></div>
          <div class="pair"><button type="button" class="box pick"><svg><use href="#i-layer-add"/></svg>Couche</button></div>
        </section>

        <section class="block">
          <h3>Paramètres de jointure</h3>
          <p>Spécifier la relation entre les entrées et les enregistrements à renvoyer.</p>
          <div class="row first"><label class="switch"><input type="checkbox">Utiliser la relation spatiale</label><button type="button" class="plain" aria-label="Information"><svg><use href="#i-info"/></svg></button></div>
          <div class="row wide"><label class="switch"><input type="checkbox">Utiliser la relation attributaire</label><button type="button" class="plain" aria-label="Information"><svg><use href="#i-info"/></svg></button></div>
          <div class="row wide"><label for="operation">Opération de jointure<i class="req"></i></label><button type="button" class="plain" aria-label="Information"><svg><use href="#i-info"/></svg></button></div>
          <div class="select low"><select id="operation"><option>Joindre un vers un</option></select><svg><use href="#i-down"/></svg></div>
          <div class="row after"><span id="multi">Plusieurs enregistrements correspondants</span><button type="button" class="plain" aria-label="Information"><svg><use href="#i-info"/></svg></button></div>
          <div class="radios" role="radiogroup" aria-labelledby="multi">
            <label><input type="radio" name="m" checked><span>Conserver uniquement le premier enregistrement correspondant</span></label>
            <label><input type="radio" name="m"><span>Calculer les statistiques de champ</span></label>
            <label><input type="radio" name="m"><span>Calculer uniquement le total</span></label>
          </div>
          <div class="row far soft"><span>Trier par</span><button type="button" class="plain" aria-label="Information"><svg><use href="#i-info"/></svg></button></div>
          <div class="sort"><span>Champ</span><button type="button" class="box">Sélectionner ...<svg><use href="#i-down"/></svg></button></div>
          <div class="row far"><span>Type de jointure</span><button type="button" class="plain" aria-label="Information"><svg><use href="#i-info"/></svg></button></div>
          <div class="segments low"><button type="button" class="on">Jointure interne</button><button type="button">Jointure gauche</button></div>
        </section>

        <section class="block inset">
          <h3>Couche de résultat</h3>
          <p>Fournir un nom pour la couche de résultat.</p>
          <div class="row first"><label for="nom">Nom en sortie<i class="req"></i></label><button type="button" class="plain" aria-label="Information"><svg><use href="#i-info"/></svg></button></div>
          <input id="nom" class="text low" type="text" placeholder="Saisir un nom unique...">
          <div class="row after soft"><label for="dossier">Enregistrer dans un dossier</label><button type="button" class="plain" aria-label="Information"><svg><use href="#i-info"/></svg></button></div>
          <div class="select low with-icon"><svg class="lead"><use href="#i-home"/></svg><select id="dossier"><option>maxime.forriez_fl_su</option></select><svg><use href="#i-down"/></svg></div>
        </section>

        <section class="block inset environment">
          <div><h3>Paramètres d’environnement</h3>
          <p>Spécifiez des paramètres supplémentaires qui affectent la façon dont l’analyse est effectuée.</p></div>
          <button type="button" class="plain" aria-label="Développer"><svg><use href="#i-down"/></svg></button>
        </section>
      </form>
      <div class="scroll" aria-hidden="true">
        <div class="track top"><svg viewBox="0 0 21 21"><path d="M6 13l4.500-4.500L15 13"/></svg><i></i></div>
        <div class="track bottom"><i></i><svg viewBox="0 0 21 21"><path d="M6 8l4.500 4.500L15 8"/></svg></div>
      </div>
    </div>
    <div class="tool-foot">
      <a href="#credits">Estimer les crédits</a>
      <div class="actions"><button class="primary">Exécuter</button><button>Retour</button></div>
    </div>
  </section>

  <nav class="rail light-rail" aria-label="Outils">
    <button class="off" aria-label="Propriétés"><svg><use href="#i-sliders"/></svg></button>
    <button class="off" aria-label="Styles"><svg><use href="#i-shapes"/></svg></button>
    <button class="off" aria-label="Champs"><svg viewBox="0 0 24 24"><path d="M2.500 2.500h3v3h-3zM8 4h10M2.500 8.500h3v3h-3zM8 10h10M2.500 14.500h3v3h-3zM7.500 16h3"/><text x="11" y="22">fx</text></svg></button>
    <button class="off" aria-label="Effets"><svg><use href="#i-cube"/></svg></button>
    <button class="off" aria-label="Filtre"><svg><use href="#i-funnel"/></svg></button>
    <button class="end" aria-label="Plus"><svg><use href="#i-more"/></svg></button>
    <button class="off end" aria-label="Croquis"><svg><use href="#i-style"/></svg></button>
    <button class="active end" aria-label="Analyse"><svg><use href="#i-analysis"/></svg></button>
    <button aria-label="Mise à jour"><svg><use href="#i-edit"/></svg></button>
    <button class="end" aria-label="Dessin"><svg><use href="#i-sketch"/></svg></button>
    <button aria-label="Outils"><svg><use href="#i-wrench"/></svg></button>
    <span class="spacer"></span>
    <button class="end" aria-label="Réduire"><svg><use href="#i-left2"/></svg></button>
  </nav>
</main>
</body>
</html>
```

FILE: styles.css
```css
* { box-sizing: border-box; }

body {
  margin: 0;
  background: #fff;
  color: #323232;
  font: 15px/20px Lato, "Open Sans", sans-serif;
  font-variant-ligatures: none;
}

h1, h2, h3, p, ul { margin: 0; padding: 0; font-weight: 400; }
ul { list-style: none; }

button, select, input { font: inherit; color: inherit; }
button { padding: 0; border: 0; background: none; cursor: pointer; border-radius: 0; }
a { color: inherit; text-decoration: none; }

svg { display: block; fill: none; stroke: currentColor; stroke-width: 1.2; flex: none; }
button svg, .handle, .select svg { width: 24px; height: 24px; }
.fill { fill: currentColor; stroke: none; }
.sprite { position: absolute; width: 0; height: 0; }
.plain { display: grid; place-items: center; color: #6a6a6a; }
.badge {
  position: absolute;
  left: 36px;
  top: 36px;
  width: 10px;
  height: 10px;
  border-radius: 50%;
  background: #009af2;
}

/* top bar */
.topbar { display: flex; align-items: center; height: 71px; border-bottom: 1px solid #dfdfdf; }
.menu { margin: 0 42px 0 24px; }
.menu svg { width: 24px; height: 20px; }
.topbar h1 { flex: 1; padding-bottom: 4px; font-size: 20px; line-height: 24px; color: #4a4a4a; }
.account {
  display: flex;
  align-items: center;
  width: 414px;
  height: 70px;
  padding-left: 23px;
  gap: 45px;
  border-left: 1px solid #dfdfdf;
}
.account .plain svg { width: auto; height: auto; }
.account .dark { color: #151515; }
.user { display: flex; gap: 15px; margin-left: -8px; align-items: center; }
.avatar { stroke: none; }
.who { display: grid; padding-bottom: 4px; font-size: 18px; line-height: 26px; color: #6a6a6a; }
.who b { font-size: 19px; color: #595959; }

/* page columns */
.workspace { display: grid; grid-template-columns: 61px 384px minmax(0, 1fr) 384px 61px; align-items: start; }
.rail, .layers, .map { min-height: 784px; }

.rail { display: flex; flex-direction: column; }
.rail button { position: relative; display: grid; place-items: center; min-height: 60px; color: #9f9f9f; }
.rail .end { min-height: 61px; border-bottom: 1px solid #4a4a4a; }
.rail .spacer { flex: 1; }
.dark-rail { background: #2b2b2b; border-right: 1px solid #4a4a4a; }
.dark-rail .active { background: #151515; color: #fff; }
.dark-rail .off { color: #4a4a4a; }
.light-rail { border-left: 1px solid #dfdfdf; }
.light-rail button { color: #6a6a6a; }
.light-rail .end { border-color: #dfdfdf; }
.light-rail .off { color: #cacaca; }
.light-rail .active { background: #eaeaea; color: #151515; }
.light-rail text { font: italic 12px Lato, sans-serif; fill: currentColor; stroke: none; }

/* layer list */
.layers { background: #f8f8f8; border-right: 1px solid #dfdfdf; border-bottom: 1px solid #dfdfdf; }
.layers-head {
  display: flex;
  align-items: center;
  justify-content: space-between;
  height: 64px;
  padding: 0 18px 0 15px;
  background: #fff;
  border-bottom: 1px solid #dfdfdf;
}
.layers h2 { padding-bottom: 4px; font-size: 21px; line-height: 24px; font-weight: 500; color: #151515; }
.layers li { display: flex; align-items: center; height: 60px; padding-left: 3px; background: #fff; }
.handle { color: #949494; margin-right: 33px; }
.layer {
  display: flex;
  align-items: center;
  flex: 1;
  gap: 15px;
  height: 60px;
  padding: 0 8px 2px 0;
  font-size: 18px;
  border-bottom: 1px solid #dfdfdf;
}
.layers li:last-child .layer { border: 0; }
.layer span { flex: 1; padding-bottom: 3px; }
.add {
  display: flex;
  align-items: center;
  width: 165px;
  height: 40px;
  margin: 10px auto 0 109px;
  border: 1px solid #007ac2;
  background: #fff;
  color: #007ac2;
}
.add-main { display: flex; align-items: center; gap: 14px; padding-left: 12px; flex: 1; font-size: 18px; }
.add-main span { padding-bottom: 3px; }
.add-more { border-left: 2px solid #007ac2; width: 41px; height: 28px; display: grid; place-items: center; }

/* map */
.map { position: relative; overflow: hidden; display: grid; }
.map-canvas { width: 100%; height: 100%; min-height: 784px; stroke: none; }
.white-roads { fill: none; stroke: #fff; stroke-width: 8; stroke-linejoin: round; stroke-linecap: round; }
.grey-roads { fill: none; stroke: #c1c1be; stroke-width: 9; stroke-linejoin: round; stroke-linecap: round; }
.grey-roads.casing { stroke: #e3e3de; stroke-width: 15; }
.towns, .quarters, .shields { font-family: "Liberation Sans", Arial, sans-serif; text-anchor: middle; }
.towns { font-size: 16px; fill: #1e1e1e; stroke: #f5f4ee; stroke-width: 2px; paint-order: stroke; }
.towns.large { font-size: 18px; }
.towns.city { font-size: 20px; }
.quarters { font-size: 14px; fill: #8f8f8f; stroke: #f5f4ee; stroke-width: 2px; paint-order: stroke; }
.quarters.peaks { fill: #6e6547; }
.quarters.woods { fill: #56a04a; stroke: #e4edd2; }
.shields { font-size: 12px; }
.shields rect { fill: #fff; stroke: #8a8a8a; stroke-width: 1; }
.shields text { fill: #2f2f2f; }
.map-tools { position: absolute; right: 19px; bottom: 37px; display: grid; gap: 13px; }
.map-tools button {
  display: grid;
  place-items: center;
  width: 40px;
  height: 40px;
  background: #fff;
  color: #6a6a6a;
  box-shadow: 0 1px 2px rgba(0, 0, 0, .3);
}
.zoom button + button { border-top: 1px solid #cacaca; }
.credits {
  position: absolute;
  inset: auto 0 0;
  display: flex;
  justify-content: space-between;
  padding: 0 7px 1px;
  line-height: 19px;
  white-space: nowrap;
  background: rgba(255, 255, 255, .72);
}

/* join tool */
.tool { background: #fff; }
.tool-head { display: flex; align-items: center; height: 65px; padding-right: 18px; border-bottom: 1px solid #dfdfdf; }
.tool-head h2 { flex: 1; padding: 0 0 3px 16px; font-size: 18px; line-height: 24px; color: #4a4a4a; }
.back {
  display: grid;
  place-items: center;
  width: 39px;
  height: 64px;
  margin-left: 1px;
  border: 2px solid #007ac2;
  background: #f3f3f3;
  color: #151515;
}
.back svg { stroke-width: 2; }
.tool-scroll { display: grid; grid-template-columns: 363px 21px; }
.tabs { display: grid; grid-template-columns: repeat(4, 1fr); height: 51px; border-bottom: 1px solid #dfdfdf; }
.tabs button { position: relative; display: grid; place-items: center; color: #6a6a6a; }
.tabs .on { background: #eaeaea; color: #151515; }
.tabs .badge { left: 50px; top: 31px; background: #007ac2; }

.block { padding: 0 15px 19px; }
.block::before {
  content: "";
  display: block;
  height: 21px;
  margin: 0 -15px 12px;
  border-top: 1px solid #dfdfdf;
  background: #f8f8f8;
}
.block.opening::before { height: 10px; border: 0; }
.block.inset { margin-left: 7px; padding-left: 8px; }
.block.inset::before { margin-left: -8px; }
.block h3 { font-size: 18px; line-height: 24px; font-weight: 500; color: #151515; }
.block p { padding-top: 2px; line-height: 21px; color: #6a6a6a; }
.row { display: flex; justify-content: space-between; height: 24px; padding-right: 8px; line-height: 16px; }
.row.soft { color: #595959; }
.row.first { margin-top: 38px; }
.row.after { margin-top: 23px; }
.row.wide { margin-top: 26px; }
.row.far { margin-top: 33px; }
.low { margin-top: 18px; }
.req { display: inline-block; width: 5px; height: 5px; margin: 0 0 3px 10px; border-radius: 50%; background: #d83020; }
.box { border: 1px solid #cacaca; background: #fff; height: 30px; padding-bottom: 2px; color: #151515; }
.pair { display: flex; gap: 10px; margin-top: 13px; }
.pick { flex: 1; display: flex; align-items: center; justify-content: center; gap: 8px; }
.square { width: 30px; display: grid; place-items: center; padding: 0; }

.switch { display: flex; gap: 10px; }
.switch input {
  appearance: none;
  width: 30px;
  height: 15px;
  margin: 1px 0 0;
  border: 1px solid #cacaca;
  border-radius: 8px;
  background: radial-gradient(circle at 6px 6px, #fff 5px, #949494 6px 7px, #f3f3f3 8px);
}
.select { display: grid; grid-template-columns: 1fr 41px; align-items: center; border: 1px solid #cacaca; height: 30px; }
.select select { grid-area: 1 / 1 / 2 / 3; appearance: none; border: 0; background: none; padding: 0 10px 3px; height: 28px; }
.select svg { grid-area: 1 / 2; color: #6a6a6a; margin-left: 8px; pointer-events: none; }
.select .lead { grid-area: 1 / 1; color: #151515; }
.select.with-icon select { padding-left: 40px; color: #151515; }
.radios { display: grid; gap: 10px; margin-top: 17px; }
.radios label { display: flex; align-items: center; gap: 10px; padding-right: 60px; }
.radios input {
  appearance: none;
  flex: none;
  width: 15px;
  height: 15px;
  margin: 0;
  border: 1px solid #cacaca;
  border-radius: 50%;
}
.radios input:checked { border: 5px solid #007ac2; }
.sort {
  display: flex;
  align-items: center;
  justify-content: space-between;
  height: 52px;
  margin-top: 13px;
  padding: 0 10px;
  border: 1px solid #cacaca;
  border-radius: 4px;
  color: #6a6a6a;
}
.sort .box { display: flex; align-items: center; justify-content: space-between; width: 155px; padding: 0 7px 1px 8px; }
.segments { display: flex; width: fit-content; height: 30px; padding: 1px 2px 2px; border: 1px solid #cacaca; color: #6a6a6a; }
.segments button { padding: 0 12px 3px; }
.segments button + button { padding: 0 14px 3px 16px; }
.segments .on { background: #007ac2; color: #fff; }
.text { display: block; width: 100%; height: 30px; padding: 0 10px 3px; border: 1px solid #cacaca; border-radius: 0; }
.text::placeholder { color: #757575; opacity: 1; }
.block.environment {
  display: grid;
  grid-template-columns: 1fr 24px;
  column-gap: 16px;
  align-items: center;
  padding-right: 13px;
  padding-bottom: 14px;
  border-bottom: 1px solid #dfdfdf;
}
.block.environment::before { grid-column: 1 / -1; height: 11px; margin-right: -13px; }
.environment h3 { color: #4a4a4a; }

.scroll { display: flex; flex-direction: column; justify-content: space-between; }
.track { background: #f0f0f0; border-right: 1px solid #dfdfdf; }
.track svg { width: 20px; height: 21px; stroke: #505050; stroke-width: 3; }
.track i { display: block; height: 185px; background: #cdcdcd; }
.track.top { padding-bottom: 163px; border-color: #f0f0f0; }
.track.bottom { padding-top: 13px; }
.tool-foot { margin-left: 7px; padding: 38px 14px 9px 8px; border-top: 1px solid #dfdfdf; border-right: 1px solid #dfdfdf; text-align: center; }
.tool-foot a { font-size: 18px; color: #007ac2; }
.actions { display: grid; grid-template-columns: 1fr 1fr; height: 39px; margin-top: 26px; border: 1px solid #007ac2; color: #007ac2; font-size: 18px; }
.actions button { padding-bottom: 3px; }
.primary { background: #007ac2; color: #fff; }
```
